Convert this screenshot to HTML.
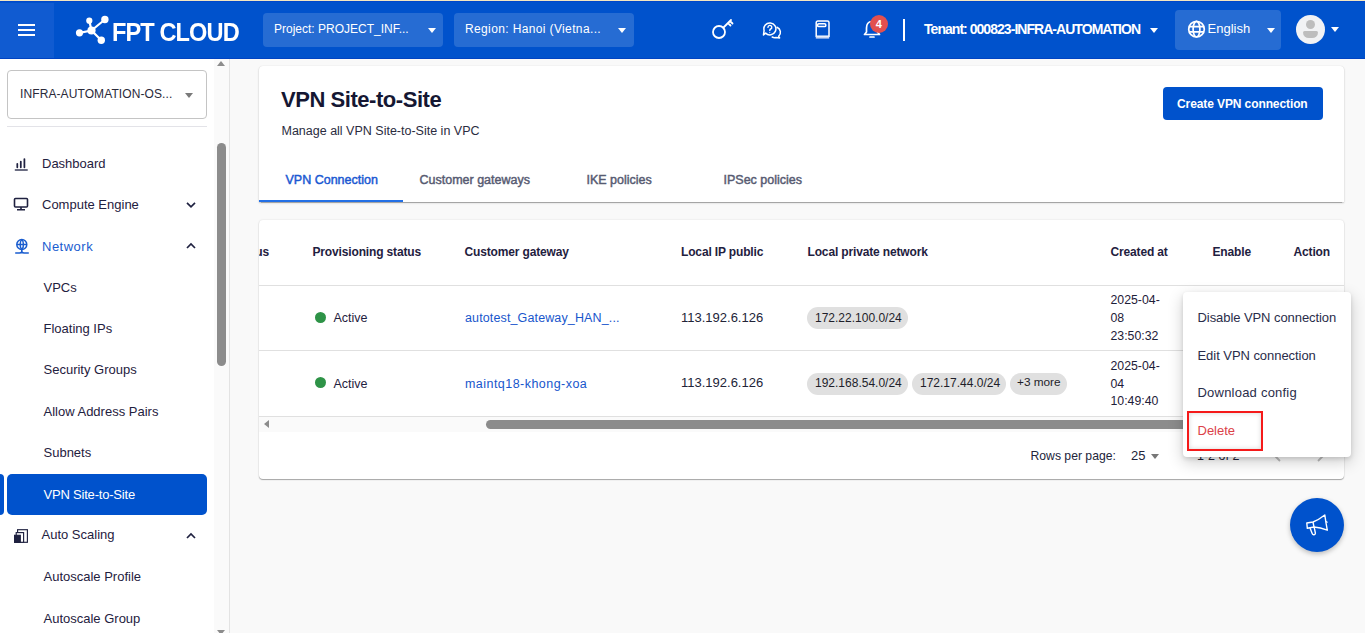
<!DOCTYPE html>
<html><head><meta charset="utf-8"><title>VPN Site-to-Site</title>
<style>
html,body{margin:0;padding:0;width:1365px;height:633px;overflow:hidden;background:#f9f9f9;font-family:"Liberation Sans",sans-serif;}
.a{position:absolute;}
.t{position:absolute;line-height:1;white-space:nowrap;}
</style></head><body>
<div class="a" style="left:0px;top:0px;width:1365px;height:1px;background:#f3e7c0"></div>
<div class="a" style="left:0px;top:1px;width:1365px;height:57px;background:#0052cc"></div>
<div class="a" style="left:0px;top:58px;width:1365px;height:1px;background:#0043c2"></div>
<div class="a" style="left:0px;top:3px;width:54px;height:55px;background:#105bd1"></div>
<div class="a" style="left:0px;top:1px;width:1365px;height:1px;background:#0047cb"></div>
<div class="a" style="left:18px;top:24px;width:17px;height:2px;background:#fff"></div>
<div class="a" style="left:18px;top:29px;width:17px;height:2px;background:#fff"></div>
<div class="a" style="left:18px;top:34px;width:17px;height:2px;background:#fff"></div>
<svg class="a" style="left:75px;top:15px" width="36" height="30" viewBox="0 0 36 30">
<g stroke="#fff" stroke-width="2.2" stroke-linecap="round" fill="none">
<line x1="4.5" y1="17.8" x2="16.5" y2="15.5"/><line x1="16.5" y1="15.5" x2="29.9" y2="4.5"/><line x1="16.5" y1="15.5" x2="26.3" y2="25.2"/><line x1="14.3" y1="5.7" x2="16.5" y2="15.5"/>
</g><g fill="#fff"><circle cx="4.5" cy="17.8" r="3.6"/><circle cx="14.3" cy="5.7" r="3.1"/><circle cx="16.5" cy="15.5" r="4.1"/><circle cx="29.9" cy="4.5" r="3.7"/><circle cx="26.3" cy="25.2" r="3.7"/></g></svg>
<div class="t" style="left:111.5px;top:18.89px;font-size:26px;color:#fff;font-weight:700;letter-spacing:-1px;transform:scaleX(0.907);transform-origin:0 0;">FPT CLOUD</div>
<div class="a" style="left:263px;top:13px;width:180px;height:34px;background:#266cd3;border-radius:4px"></div>
<div class="t" style="left:274px;top:22.64px;font-size:12px;color:#fff;font-weight:400;">Project: PROJECT_INF...</div>
<div class="a" style="left:428px;top:27.5px;width:0px;height:0px;border-left:4px solid transparent;border-right:4px solid transparent;border-top:5px solid #fff"></div>
<div class="a" style="left:454px;top:13px;width:180px;height:34px;background:#266cd3;border-radius:4px"></div>
<div class="t" style="left:465px;top:22.64px;font-size:12px;color:#fff;font-weight:400;letter-spacing:0.37px;">Region: Hanoi (Vietna...</div>
<div class="a" style="left:618px;top:27.5px;width:0px;height:0px;border-left:4px solid transparent;border-right:4px solid transparent;border-top:5px solid #fff"></div>
<svg class="a" style="left:711px;top:17.8px" width="24" height="22" viewBox="0 0 24 22" fill="none" stroke="#fff" stroke-width="1.8" stroke-linecap="round">
<circle cx="8" cy="14" r="6"/><path d="M12.5 9.5 L20 2 M17 5 L19.5 7.5 M19 3 L21.5 5.5"/></svg>
<svg class="a" style="left:762px;top:21.5px" width="21" height="18" viewBox="0 0 21 18" fill="none" stroke="#fff" stroke-width="1.5" stroke-linejoin="round" stroke-linecap="round"><path d="M3.66 11.14 A6 6 0 1 0 2.1 8.45 L1.5 12.9 Z"/><path d="M15 5.2 A5.5 5.5 0 0 1 16.6 14.4 L17.6 15.9 L13.9 15.6 A5.5 5.5 0 0 1 10.2 15"/><path d="M6 5.4 A1.9 1.9 0 1 1 8.7 7 C8.1 7.3 7.8 7.7 7.8 8.5" stroke-width="1.4"/><circle cx="7.8" cy="10.6" r=".55" fill="#fff" stroke="none"/></svg>
<svg class="a" style="left:814.3px;top:20px" width="17" height="20" viewBox="0 0 17 20" fill="none" stroke="#fff" stroke-width="1.5"><path d="M2.2 16.2 V2.6 A1.6 1.6 0 0 1 3.8 1 H13.4 A1.6 1.6 0 0 1 15 2.6 V16.2 Z"/><rect x="3.6" y="3.7" width="8.2" height="2.9" rx="1.2"/><path d="M1.8 17.6 H15.2" stroke="#c8d6f2" stroke-width="2"/></svg>
<svg class="a" style="left:861.5px;top:18.5px" width="20" height="20" viewBox="0 0 20 20" fill="none" stroke="#fff" stroke-width="1.7" stroke-linejoin="round">
<path d="M10 2.5 C6 2.5 4.5 5.5 4.5 9 V13 L2.5 15.5 H17.5 L15.5 13 V9 C15.5 5.5 14 2.5 10 2.5 Z"/><path d="M8 18 H12" stroke-linecap="round"/></svg>
<div class="a" style="left:870px;top:15px;width:18px;height:18px;background:#e2504f;border-radius:50%"></div>
<div class="t" style="left:875.8px;top:18.69px;font-size:11px;color:#fff;font-weight:700;">4</div>
<div class="a" style="left:903px;top:19px;width:1.6px;height:22px;background:#fff"></div>
<div class="t" style="left:924px;top:21.75px;font-size:14px;color:#fff;font-weight:700;letter-spacing:-0.96px;">Tenant: 000823-INFRA-AUTOMATION</div>
<div class="a" style="left:1149.5px;top:27.5px;width:0px;height:0px;border-left:4px solid transparent;border-right:4px solid transparent;border-top:5px solid #fff"></div>
<div class="a" style="left:1175px;top:10px;width:106px;height:40px;background:#266cd3;border-radius:4px"></div>
<svg class="a" style="left:1187px;top:20px" width="19" height="19" viewBox="0 0 19 19" fill="none" stroke="#fff" stroke-width="1.7"><circle cx="9.5" cy="9.2" r="7.8"/><ellipse cx="9.5" cy="9.2" rx="3.4" ry="7.8"/><path d="M2 6.6 H17 M2 11.8 H17"/></svg>
<div class="t" style="left:1207.5px;top:21.80px;font-size:13px;color:#fff;font-weight:400;">English</div>
<div class="a" style="left:1266.5px;top:27.5px;width:0px;height:0px;border-left:4px solid transparent;border-right:4px solid transparent;border-top:5px solid #fff"></div>
<div class="a" style="left:1296px;top:15px;width:29px;height:29px;background:#f1f2f4;border-radius:50%"></div>
<div class="a" style="left:1305.7px;top:20.1px;width:9px;height:9px;background:#bdbdbd;border-radius:50%"></div>
<div class="a" style="left:1303.3px;top:31px;width:14.8px;height:7px;background:#bdbdbd;border-radius:2px 2px 7.4px 7.4px / 2px 2px 7px 7px"></div>
<div class="a" style="left:1331px;top:27px;width:0px;height:0px;border-left:4px solid transparent;border-right:4px solid transparent;border-top:5px solid #fff"></div>
<div class="a" style="left:0px;top:59px;width:229px;height:574px;background:#fff"></div>
<div class="a" style="left:229px;top:59px;width:1px;height:574px;background:#e3e3e3"></div>
<div class="a" style="left:214px;top:59px;width:15px;height:574px;background:#fafafa"></div>
<div class="a" style="left:217px;top:143px;width:9px;height:223px;background:#8c8c8c;border-radius:5px"></div>
<div class="a" style="left:217px;top:61px;width:0px;height:0px;border-left:4.5px solid transparent;border-right:4.5px solid transparent;border-bottom:5px solid #8c8c8c"></div>
<div class="a" style="left:217px;top:630px;width:0px;height:0px;border-left:4.5px solid transparent;border-right:4.5px solid transparent;border-top:5px solid #8c8c8c"></div>
<div class="a" style="left:7px;top:70px;width:200px;height:49px;border:1px solid #c4c4c4;border-radius:4px;box-sizing:border-box"></div>
<div class="t" style="left:20px;top:87.84px;font-size:12px;color:#2a2a3a;font-weight:400;letter-spacing:0.1px;">INFRA-AUTOMATION-OS...</div>
<div class="a" style="left:185px;top:93px;width:0px;height:0px;border-left:4.5px solid transparent;border-right:4.5px solid transparent;border-bottom:0;border-top:5px solid #7a7a7a"></div>
<div class="a" style="left:7px;top:126px;width:200px;height:1px;background:#e3e3e8"></div>
<div class="a" style="left:0px;top:474px;width:4px;height:41px;background:#0052cc;border-radius:0 4px 4px 0"></div>
<div class="a" style="left:7px;top:474px;width:200px;height:41px;background:#0052cc;border-radius:5px"></div>
<div class="t" style="left:42px;top:157.00px;font-size:13px;color:#1f2140;font-weight:400;">Dashboard</div>
<svg class="a" style="left:14px;top:158px" width="15" height="14" viewBox="0 0 15 14" stroke-linecap="round" stroke-width="1.75" stroke="#1f2140"><path d="M3.3 5.8 V9.3 M6.8 3.5 V9.3 M10.4 1.1 V9.3"/><path d="M1.4 11.9 H13.2" stroke="#3b3e5a" stroke-width="1.5"/></svg>
<div class="t" style="left:42px;top:197.80px;font-size:13px;color:#1f2140;font-weight:400;">Compute Engine</div>
<svg class="a" style="left:186px;top:201.3px" width="10" height="8" viewBox="0 0 10 8"><path d="M1 1.8 L5 5.8 L9 1.8" fill="none" stroke="#1f2140" stroke-width="1.7"/></svg>
<svg class="a" style="left:13px;top:197px" width="16" height="14" viewBox="0 0 16 14" fill="none" stroke="#1f2140" stroke-width="1.6"><rect x="1.5" y="1.5" width="13" height="8.5" rx="1"/><path d="M8 10 V12.5 M4 12.8 H12"/></svg>
<div class="t" style="left:42px;top:239.80px;font-size:13px;color:#1a5dcf;font-weight:400;letter-spacing:0.5px;">Network</div>
<svg class="a" style="left:186px;top:242.3px" width="10" height="8" viewBox="0 0 10 8"><path d="M1 6 L5 2 L9 6" fill="none" stroke="#1f2140" stroke-width="1.7"/></svg>
<svg class="a" style="left:13.5px;top:238px" width="16" height="17" viewBox="0 0 16 17" fill="none" stroke="#1a5dcf" stroke-width="1.5"><circle cx="7.8" cy="6.5" r="5"/><path d="M2.8 6.5 H12.8 M7.8 1.5 C5.6 3.3 5.6 9.7 7.8 11.5 M7.8 1.5 C10 3.3 10 9.7 7.8 11.5"/><path d="M7.8 11.5 C7.8 14 8 14.8 5.5 15 H1.2 M7.8 11.5 C7.8 14 7.6 14.8 10.1 15 H14.8" stroke-width="1.6"/></svg>
<div class="t" style="left:43.5px;top:280.90px;font-size:13px;color:#1f2140;font-weight:400;">VPCs</div>
<div class="t" style="left:43.5px;top:321.70px;font-size:13px;color:#1f2140;font-weight:400;">Floating IPs</div>
<div class="t" style="left:43.5px;top:363.40px;font-size:13px;color:#1f2140;font-weight:400;">Security Groups</div>
<div class="t" style="left:43.5px;top:405.00px;font-size:13px;color:#1f2140;font-weight:400;">Allow Address Pairs</div>
<div class="t" style="left:43.5px;top:446.20px;font-size:13px;color:#1f2140;font-weight:400;">Subnets</div>
<div class="t" style="left:43.5px;top:487.60px;font-size:13px;color:#fff;font-weight:400;letter-spacing:-0.2px;">VPN Site-to-Site</div>
<div class="t" style="left:41.5px;top:528.40px;font-size:13px;color:#1f2140;font-weight:400;">Auto Scaling</div>
<svg class="a" style="left:186px;top:531.9px" width="10" height="8" viewBox="0 0 10 8"><path d="M1 6 L5 2 L9 6" fill="none" stroke="#1f2140" stroke-width="1.7"/></svg>
<svg class="a" style="left:14px;top:529px" width="15" height="15" viewBox="0 0 15 15" stroke="#1f2140" stroke-width="1.15"><rect x="3.6" y="0.7" width="9.8" height="12.6" fill="#fff"/><rect x="2.2" y="3.6" width="7.4" height="9.7" fill="#fff"/><rect x="0.5" y="6.3" width="5.8" height="7.1" fill="#1f2140"/></svg>
<div class="t" style="left:43.5px;top:569.80px;font-size:13px;color:#1f2140;font-weight:400;">Autoscale Profile</div>
<div class="t" style="left:43.5px;top:611.70px;font-size:13px;color:#1f2140;font-weight:400;">Autoscale Group</div>
<div class="a" style="left:230px;top:59px;width:1135px;height:574px;background:#f9f9f9"></div>
<div class="a" style="left:259px;top:66px;width:1085px;height:136px;background:#fff;border-radius:4px 4px 0 0;box-shadow:0 1px 2px rgba(0,0,0,.22),0 0 1px rgba(0,0,0,.12)"></div>
<div class="t" style="left:281px;top:89.18px;font-size:22px;color:#151733;font-weight:700;letter-spacing:-0.45px;">VPN Site-to-Site</div>
<div class="t" style="left:281.5px;top:125.42px;font-size:12.5px;color:#2a2c40;font-weight:400;">Manage all VPN Site-to-Site in VPC</div>
<div class="a" style="left:1163px;top:87px;width:160px;height:33px;background:#0052cc;border-radius:4px"></div>
<div class="t" style="left:1177px;top:97.84px;font-size:12px;color:#fff;font-weight:700;letter-spacing:-0.1px;">Create VPN connection</div>
<div class="t" style="left:285.5px;top:173.92px;font-size:12.5px;color:#1a58d2;font-weight:400;-webkit-text-stroke:0.45px #1a58d2;">VPN Connection</div>
<div class="t" style="left:419.5px;top:173.92px;font-size:12.5px;color:#575b72;font-weight:400;-webkit-text-stroke:0.45px #575b72;">Customer gateways</div>
<div class="t" style="left:586.5px;top:173.92px;font-size:12.5px;color:#575b72;font-weight:400;-webkit-text-stroke:0.45px #575b72;">IKE policies</div>
<div class="t" style="left:723.5px;top:173.92px;font-size:12.5px;color:#575b72;font-weight:400;-webkit-text-stroke:0.45px #575b72;">IPSec policies</div>
<div class="a" style="left:261px;top:201.6px;width:1081px;height:1.2px;background:#a5a5a5;filter:blur(0.45px)"></div>
<div class="a" style="left:259px;top:199.6px;width:144px;height:2.2px;background:#2370e6"></div>
<div class="a" style="left:259px;top:220px;width:1085px;height:259px;background:#fff;border-radius:4px;box-shadow:0 1px 1px rgba(0,0,0,.32),0 0 2px rgba(0,0,0,.12)"></div>
<div class="a" style="left:259px;top:240px;width:14px;height:22px;overflow:hidden"><div class="t" style="left:-3.8px;top:5.84px;font-size:12px;color:#1f2140;font-weight:700;">us</div>
</div><div class="t" style="left:312.5px;top:245.84px;font-size:12px;color:#1f2140;font-weight:700;letter-spacing:-0.15px;">Provisioning status</div>
<div class="t" style="left:464.5px;top:245.84px;font-size:12px;color:#1f2140;font-weight:700;letter-spacing:-0.15px;">Customer gateway</div>
<div class="t" style="left:681px;top:245.84px;font-size:12px;color:#1f2140;font-weight:700;letter-spacing:-0.15px;">Local IP public</div>
<div class="t" style="left:807.5px;top:245.84px;font-size:12px;color:#1f2140;font-weight:700;letter-spacing:-0.15px;">Local private network</div>
<div class="t" style="left:1110.5px;top:245.84px;font-size:12px;color:#1f2140;font-weight:700;letter-spacing:-0.15px;">Created at</div>
<div class="t" style="left:1212.5px;top:245.84px;font-size:12px;color:#1f2140;font-weight:700;letter-spacing:-0.15px;">Enable</div>
<div class="t" style="left:1293.5px;top:245.84px;font-size:12px;color:#1f2140;font-weight:700;letter-spacing:-0.15px;">Action</div>
<div class="a" style="left:259px;top:285px;width:1085px;height:1px;background:#e0e0e0"></div>
<div class="a" style="left:259px;top:350px;width:1085px;height:1px;background:#e0e0e0"></div>
<div class="a" style="left:259px;top:416px;width:1085px;height:1px;background:#e0e0e0"></div>
<div class="a" style="left:315px;top:311.8px;width:11px;height:11px;background:#2e9347;border-radius:50%"></div>
<div class="t" style="left:333.5px;top:312.02px;font-size:12.5px;color:#1f2140;font-weight:400;">Active</div>
<div class="t" style="left:465px;top:311.92px;font-size:12.5px;color:#1756cc;font-weight:400;letter-spacing:0.13px;">autotest_Gateway_HAN_...</div>
<div class="t" style="left:681px;top:310.80px;font-size:13px;color:#222438;font-weight:400;">113.192.6.126</div>
<div class="a" style="left:807px;top:307.3px;width:101px;height:22px;background:#e0e0e0;border-radius:11px"></div>
<div class="t" style="left:815px;top:311.64px;font-size:12px;color:#1e1e2a;font-weight:400;">172.22.100.0/24</div>
<div class="t" style="left:1110.5px;top:294.29px;font-size:12.3px;color:#1e2038;font-weight:400;">2025-04-</div>
<div class="t" style="left:1110.5px;top:311.99px;font-size:12.3px;color:#1e2038;font-weight:400;">08</div>
<div class="t" style="left:1110.5px;top:329.69px;font-size:12.3px;color:#1e2038;font-weight:400;">23:50:32</div>
<div class="a" style="left:315px;top:377.4px;width:11px;height:11px;background:#2e9347;border-radius:50%"></div>
<div class="t" style="left:333.5px;top:377.62px;font-size:12.5px;color:#1f2140;font-weight:400;">Active</div>
<div class="t" style="left:465px;top:377.52px;font-size:12.5px;color:#1756cc;font-weight:400;letter-spacing:0.46px;">maintq18-khong-xoa</div>
<div class="t" style="left:681px;top:376.40px;font-size:13px;color:#222438;font-weight:400;">113.192.6.126</div>
<div class="a" style="left:807px;top:372.9px;width:101px;height:22px;background:#e0e0e0;border-radius:11px"></div>
<div class="t" style="left:815px;top:377.24px;font-size:12px;color:#1e1e2a;font-weight:400;">192.168.54.0/24</div>
<div class="a" style="left:912px;top:372.9px;width:94px;height:22px;background:#e0e0e0;border-radius:11px"></div>
<div class="t" style="left:920px;top:377.24px;font-size:12px;color:#1e1e2a;font-weight:400;">172.17.44.0/24</div>
<div class="a" style="left:1010px;top:372.9px;width:57px;height:22px;background:#e0e0e0;border-radius:11px"></div>
<div class="t" style="left:1017px;top:377.41px;font-size:11.8px;color:#1e1e2a;font-weight:400;">+3 more</div>
<div class="t" style="left:1110.5px;top:359.89px;font-size:12.3px;color:#1e2038;font-weight:400;">2025-04-</div>
<div class="t" style="left:1110.5px;top:377.59px;font-size:12.3px;color:#1e2038;font-weight:400;">04</div>
<div class="t" style="left:1110.5px;top:395.29px;font-size:12.3px;color:#1e2038;font-weight:400;">10:49:40</div>
<div class="a" style="left:259px;top:417px;width:1085px;height:15px;background:#fafafa"></div>
<div class="a" style="left:264px;top:420px;width:0px;height:0px;border-top:4.5px solid transparent;border-bottom:4.5px solid transparent;border-right:5px solid #8c8c8c"></div>
<div class="a" style="left:486px;top:420px;width:850px;height:9px;background:#8c8c8c;border-radius:5px"></div>
<div class="t" style="left:1030.5px;top:450.17px;font-size:12.2px;color:#22243a;font-weight:400;">Rows per page:</div>
<div class="t" style="left:1131px;top:448.50px;font-size:13px;color:#22243a;font-weight:400;">25</div>
<div class="a" style="left:1151px;top:453.5px;width:0px;height:0px;border-left:4.5px solid transparent;border-right:4.5px solid transparent;border-top:5px solid #777"></div>
<div class="t" style="left:1197px;top:449.92px;font-size:12.5px;color:#22243a;font-weight:400;">1-2 of 2</div>
<svg class="a" style="left:1273px;top:449px" width="10" height="14" viewBox="0 0 10 14"><path d="M7 2 L2 7 L7 12" fill="none" stroke="#bdbdbd" stroke-width="1.8"/></svg>
<svg class="a" style="left:1315px;top:449px" width="10" height="14" viewBox="0 0 10 14"><path d="M3 2 L8 7 L3 12" fill="none" stroke="#bdbdbd" stroke-width="1.8"/></svg>
<div class="a" style="left:1183px;top:292px;width:168px;height:165px;background:#fff;border-radius:4px;box-shadow:0 5px 16px rgba(0,0,0,.2),0 2px 4px rgba(0,0,0,.12)"></div>
<div class="t" style="left:1197.5px;top:310.80px;font-size:13px;color:#2a2d4a;font-weight:400;letter-spacing:-0.07px;">Disable VPN connection</div>
<div class="t" style="left:1197.5px;top:348.70px;font-size:13px;color:#2a2d4a;font-weight:400;letter-spacing:-0.05px;">Edit VPN connection</div>
<div class="t" style="left:1197.5px;top:386.40px;font-size:13px;color:#2a2d4a;font-weight:400;letter-spacing:0.22px;">Download config</div>
<div class="t" style="left:1197.5px;top:424.40px;font-size:13px;color:#dc4148;font-weight:400;">Delete</div>
<div class="a" style="left:1187px;top:411px;width:76px;height:40px;border:2px solid #f51a1a;box-sizing:border-box;box-shadow:inset 0 0 5px rgba(0,0,0,.16)"></div>
<div class="a" style="left:1290px;top:498px;width:54px;height:54px;background:#0052cc;border-radius:50%;box-shadow:0 2px 5px rgba(0,0,0,.25)"></div>
<svg class="a" style="left:1305px;top:513px" width="24" height="24" viewBox="0 0 24 24" fill="none" stroke="#fff" stroke-width="1.4" stroke-linejoin="round">
<path d="M1.8 10 L8 9 C12 7.5 16 5 19.8 2 C20.5 7 21.3 12 22.3 17.2 C18 15.5 13.5 14.3 9 14 L2.3 15.3 Z"/><path d="M21 8.5 L22.5 9.5"/><path d="M8 9 L9 14"/><path d="M5 15 L7.3 20.8 C7.9 22.3 10.6 22 10.4 20.2 L9.3 14.8"/></svg>
</body></html>
